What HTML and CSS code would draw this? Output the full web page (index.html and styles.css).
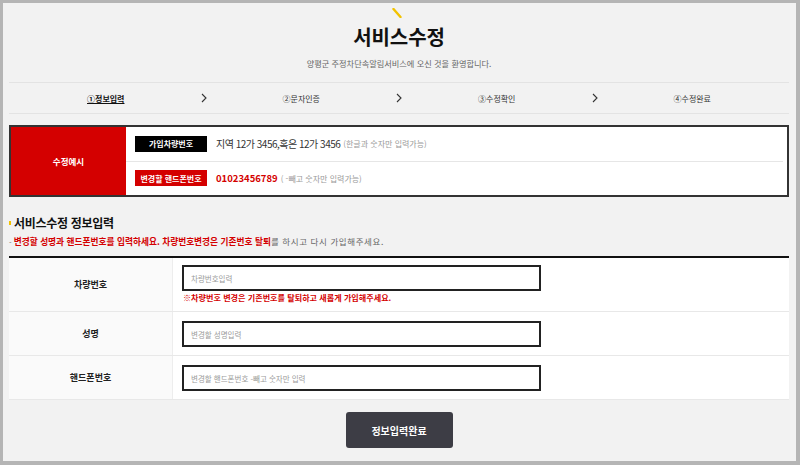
FILE: index.html
```html
<!DOCTYPE html>
<html lang="ko">
<head>
<meta charset="utf-8">
<title>서비스수정</title>
<link rel="stylesheet" href="styles.css">
</head>
<body>
<div class="frame">
  <header class="head">
    <svg class="mark" width="10" height="10" viewBox="0 0 10 10"><line x1="1.5" y1="1" x2="8.5" y2="9" stroke="#f2c200" stroke-width="2.4" stroke-linecap="round"/></svg>
    <h1 class="title">서비스수정</h1>
    <p class="sub">양평군 주정차단속알림서비스에 오신 것을 환영합니다.</p>
  </header>

  <nav class="steps">
    <span class="step active">①정보입력</span>
    <span class="arrow"><svg width="6" height="10" viewBox="0 0 6 10"><polyline points="1,1 5,5 1,9" fill="none" stroke="#333" stroke-width="1.1"/></svg></span>
    <span class="step">②문자인증</span>
    <span class="arrow"><svg width="6" height="10" viewBox="0 0 6 10"><polyline points="1,1 5,5 1,9" fill="none" stroke="#333" stroke-width="1.1"/></svg></span>
    <span class="step">③수정확인</span>
    <span class="arrow"><svg width="6" height="10" viewBox="0 0 6 10"><polyline points="1,1 5,5 1,9" fill="none" stroke="#333" stroke-width="1.1"/></svg></span>
    <span class="step">④수정완료</span>
  </nav>

  <section class="example">
    <div class="ex-label">수정예시</div>
    <div class="ex-rows">
      <div class="ex-row">
        <span class="badge">가입차량번호</span>
        <span class="ex-main">지역 12가 3456,혹은 12가 3456</span>
        <span class="ex-hint">(한글과 숫자만 입력가능)</span>
      </div>
      <div class="ex-row ex-row-line">
        <span class="badge badge-red">변경할 핸드폰번호</span>
        <span class="ex-phone">01023456789</span>
        <span class="ex-hint">( -빼고 숫자만 입력가능)</span>
      </div>
    </div>
  </section>

  <h2 class="sec-title"><span class="dot"></span>서비스수정 정보입력</h2>
  <p class="notice"><span class="dash">- </span><strong class="red">변경할 성명과 핸드폰번호를 입력하세요. 차량번호변경은 기존번호 탈퇴</strong><span class="gray">를 하시고 다시 가입해주세요.</span></p>

  <div class="form-table">
    <div class="row row-first">
      <div class="row-label">차량번호</div>
      <div class="row-field">
        <input class="field" type="text" placeholder="차량번호입력">
        <p class="field-note">※차량번호 변경은 기존번호를 탈퇴하고 새롭게 가입해주세요.</p>
      </div>
    </div>
    <div class="row">
      <div class="row-label">성명</div>
      <div class="row-field">
        <input class="field" type="text" placeholder="변경할 성명입력">
      </div>
    </div>
    <div class="row">
      <div class="row-label">핸드폰번호</div>
      <div class="row-field">
        <input class="field" type="text" placeholder="변경할 핸드폰번호 -빼고 숫자만 입력">
      </div>
    </div>
  </div>

  <div class="actions">
    <button class="submit" type="button">정보입력완료</button>
  </div>
</div>
</body>
</html>
```

FILE: styles.css
```css
* { box-sizing: border-box; margin: 0; padding: 0; }
html, body { width: 800px; height: 465px; overflow: hidden; }
body {
  font-family: "Noto Sans CJK KR", "Noto Sans", sans-serif;
  background: #b5b5b5;
  color: #222;
}
.frame {
  width: 800px;
  height: 465px;
  border-style: solid;
  border-color: #b5b5b5;
  border-width: 3px 4px 4px 3px;
  background: #f2f2f2;
  padding: 0 7px 0 6px;
}

/* header */
.head { display: flex; flex-direction: column; align-items: center; }
.mark { display: block; margin-top: 5px; margin-right: 5px; }
.title {
  margin-top: 7px;
  font-size: 20px;
  line-height: 24px;
  font-weight: 700;
  color: #111;
  letter-spacing: -0.1px;
}
.sub { margin-top: 8px; font-size: 8.2px; line-height: 12px; color: #666; }

/* steps */
.steps {
  margin-top: 13px;
  height: 32px;
  border-top: 1px solid #e3e3e3;
  border-bottom: 1px solid #e3e3e3;
  padding: 0 4px;
  display: grid;
  grid-template-columns: 1fr 10px 1fr 10px 1fr 10px 1fr;
  align-items: center;
}
.step { text-align: center; font-size: 8px; color: #333; }
.step.active { font-weight: 700; color: #111; text-decoration: underline; }
.arrow { display: flex; justify-content: center; }
.arrow svg { display: block; }

/* example */
.example {
  margin-top: 11px;
  height: 72px;
  border: 2px solid #333;
  background: #fff;
  display: flex;
}
.ex-label {
  width: 115px;
  background: #d40000;
  color: #fff;
  font-weight: 700;
  font-size: 8.5px;
  display: flex;
  align-items: center;
  justify-content: center;
}
.ex-rows { flex: 1; display: flex; flex-direction: column; }
.ex-row { flex: 1; display: flex; align-items: center; padding-left: 9px; }
.ex-row-line { border-top: 1px solid #e6e6e6; margin-right: 4px; }
.badge {
  width: 72px;
  height: 16px;
  background: #000;
  color: #fff;
  font-size: 8px;
  font-weight: 700;
  display: flex;
  align-items: center;
  justify-content: center;
  margin-right: 9px;
}
.badge-red { background: #d40000; }
.ex-main { font-size: 10px; color: #333; letter-spacing: -0.5px; }
.ex-phone { font-size: 9.5px; font-weight: 700; color: #d40000; }
.ex-hint { font-size: 8px; color: #999; margin-left: 3px; }

/* section title + notice */
.sec-title {
  margin-top: 17px;
  font-size: 12px;
  line-height: 18px;
  font-weight: 700;
  color: #111;
  display: flex;
  align-items: center;
  gap: 3px;
  letter-spacing: -0.3px;
}
.dot { width: 2px; height: 4px; background: #f2c200; }
.notice { margin-top: 2px; font-size: 8.7px; line-height: 14px; }
.dash { color: #777; font-size: 7.5px; }
.red { color: #d40000; font-weight: 700; }
.gray { color: #666; font-size: 8.5px; letter-spacing: 0.6px; }

/* form table */
.form-table { margin-top: 7px; border-top: 2px solid #111; background: #fff; }
.row {
  display: grid;
  grid-template-columns: 164px 1fr;
  border-bottom: 1px solid #e8e8e8;
}
.row-label {
  background: #fafafa;
  border-right: 1px solid #ededed;
  display: flex;
  align-items: center;
  justify-content: center;
  font-size: 9px;
  font-weight: 700;
  color: #222;
}
.row-field { padding: 9px 0 8px 9px; }
.row-first .row-field { padding: 7px 0 7px 9px; }
.field {
  display: block;
  width: 359px;
  height: 26px;
  border: 2px solid #222;
  padding: 0 7px;
  font-family: inherit;
  font-size: 7.5px;
  color: #333;
  background: #fff;
  outline: none;
}
.field::placeholder { color: #9a9a9a; }
.field-note { font-size: 8.1px; line-height: 13px; font-weight: 700; color: #d40000; padding-left: 1px; }

/* button */
.actions { display: flex; justify-content: center; margin-top: 12px; }
.submit {
  width: 107px;
  height: 36px;
  border: none;
  border-radius: 3px;
  background: #3d3d45;
  color: #fff;
  font-family: inherit;
  font-size: 10px;
  font-weight: 700;
}
```
